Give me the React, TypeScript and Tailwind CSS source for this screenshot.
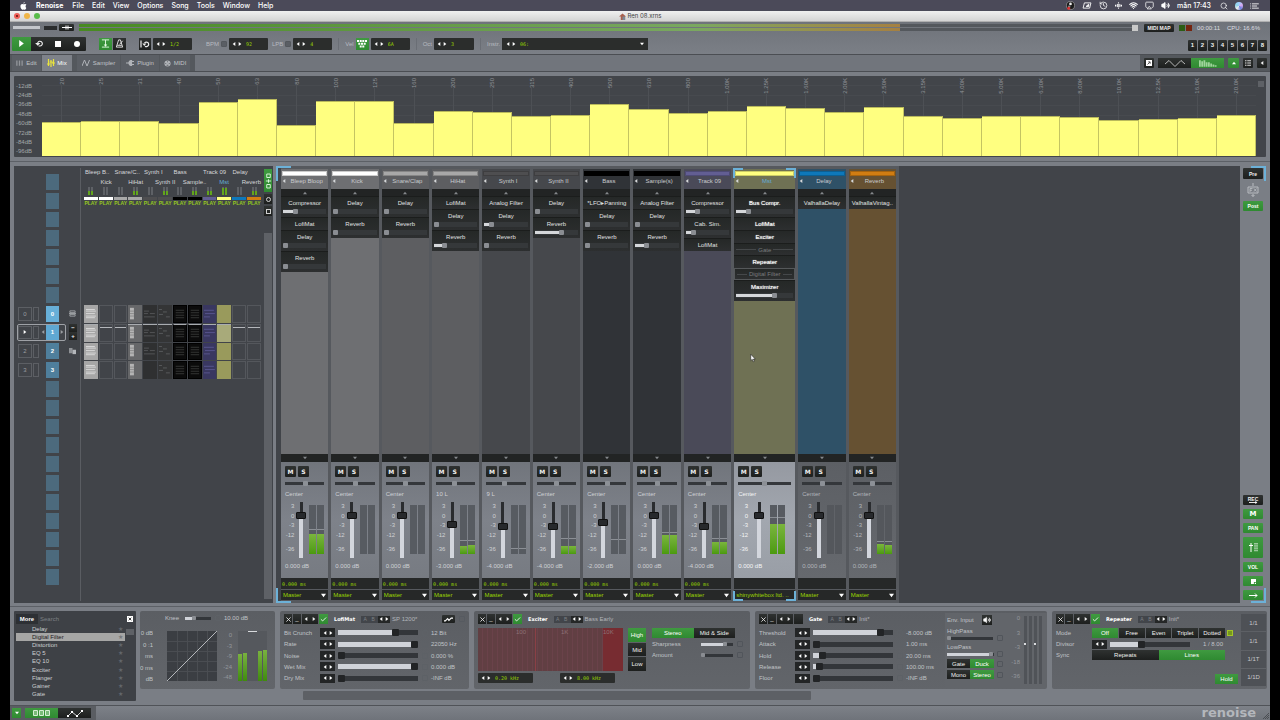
import React from "react";
import clsx from "clsx";
import { Search, Wifi, History, Volume2, Airplay, Check } from "lucide-react";

type Dir = "left" | "right" | "up" | "down";

const TRI: Record<Dir, string> = {
  left: "5,0 5,6 1,3",
  right: "1,0 1,6 5,3",
  up: "0,5 6,5 3,1",
  down: "0,1 6,1 3,5",
};

function Tri({ dir, className }: { dir: Dir; className?: string }) {
  return (
    <svg viewBox="0 0 6 6" className={clsx("shrink-0 fill-current", className ?? "size-[5px]")} aria-hidden="true">
      <polygon points={TRI[dir]} />
    </svg>
  );
}

const DARK = "bg-gradient-to-b from-[#2f3231] to-[#1d1f1e] text-[#f0f0f0]";
const GREEN = "bg-gradient-to-b from-[#3f9a40] to-[#2f8a31] text-white";

function Btn({
  on,
  className,
  label,
  children,
}: {
  on?: boolean;
  className?: string;
  label?: string;
  children?: React.ReactNode;
}) {
  return (
    <button
      type="button"
      aria-label={label}
      className={clsx("flex shrink-0 items-center justify-center whitespace-nowrap", on ? GREEN : DARK, className)}
    >
      {children}
    </button>
  );
}

function Steppers({ className, label }: { className?: string; label: string }) {
  return (
    <span className={clsx("flex shrink-0", className ?? "gap-[2px]")}>
      <button type="button" aria-label={`${label} down`} className="flex items-center">
        <Tri dir="left" className="size-1" />
      </button>
      <button type="button" aria-label={`${label} up`} className="flex items-center">
        <Tri dir="right" className="size-1" />
      </button>
    </span>
  );
}

function Field({ label, value, className }: { label: string; value: string; className?: string }) {
  return (
    <span className={clsx("flex shrink-0 items-center gap-1 rounded-[1px] bg-[#2b2d2c] pl-[3px] text-white", className)}>
      <Steppers label={label} className="gap-[2px]" />
      <input
        aria-label={label}
        defaultValue={value}
        className="w-full min-w-0 bg-transparent font-['DejaVu_Sans_Mono',monospace] text-[5px] text-[#9ad400] outline-none"
      />
    </span>
  );
}

function Tick({ label, className }: { label: string; className?: string }) {
  return (
    <input
      type="checkbox"
      aria-label={label}
      className={clsx("size-[6px] shrink-0 appearance-none rounded-[1px] border", className ?? "border-[#565a60] bg-transparent")}
    />
  );
}

/* ---------- Menu bar and title ---------- */

function MenuBar() {
  const items = ["Renoise", "File", "Edit", "View", "Options", "Song", "Tools", "Window", "Help"];
  return (
    <header className="flex h-[11px] items-center bg-[#4b4a59] pr-[11px] pl-[10px] font-['Inter',sans-serif] text-[7px] leading-none text-white">
      <svg viewBox="0 0 14 17" className="mr-[9px] h-[8px] w-[7px] fill-white" aria-label="Apple">
        <path d="M9.6 0c.1 1.500-1.100 3.200-2.700 3.300C6.700 1.700 8.100.2 9.600 0zM13 12.500c-.7 1.700-1.900 3.800-3.300 3.800-1 0-1.300-.6-2.600-.6s-1.700.6-2.600.6C2.700 16.400.5 12.500.5 9.200.5 6 2.500 4.300 4.400 4.300c1.100 0 2 .7 2.700.7.600 0 1.700-.8 3.100-.8.600 0 2 .2 2.900 1.600-2.500 1.500-2.100 5.100-.1 6.700z" />
      </svg>
      <nav className="flex gap-[8px]">
        {items.map((t, i) => (
          <a key={t} href="#" className={i === 0 ? "mr-px font-bold" : "font-medium"}>
            {t}
          </a>
        ))}
      </nav>
      <div className="ml-auto flex items-center gap-[7px]">
        <svg viewBox="0 0 10 10" className="size-[9px]" aria-hidden="true">
          <circle cx="5" cy="5" r="4.500" fill="#1a1a1a" stroke="#bbb" strokeWidth=".6" />
          <circle cx="5" cy="3.300" r="1.500" fill="#eee" />
          <circle cx="3.500" cy="6.300" r="1.400" fill="#888" />
          <circle cx="3" cy="8" r="1.700" fill="#d33" />
        </svg>
        <svg viewBox="0 0 10 8" className="h-[7px] w-[10px]" fill="none" stroke="#fff" aria-hidden="true">
          <path d="M2 1h7.500L8 7H.5z" />
          <path d="M4 5l3-2.500V5z" fill="#fff" />
        </svg>
        <History className="size-[9px]" strokeWidth={2} />
        <svg viewBox="0 0 8 8" className="size-[7px] fill-white" aria-hidden="true">
          <path d="M4 0l1 1.500H3zM4 8l1-1.500H3zM0 3h1.500v2H0zM2.200 2.300h1v3.400h-1zM3.700 2h.8v4h-.8zM5 2.300h1v3.400H5zM6.500 3H8v2H6.500z" />
        </svg>
        <Wifi className="size-[9px]" strokeWidth={3} />
        <Airplay className="size-[9px]" strokeWidth={2} />
        <Volume2 className="size-[9px] fill-white" strokeWidth={2} />
        <span className="font-medium">mån 17:43</span>
        <Search className="ml-[2px] size-[8px]" strokeWidth={2} />
        <span className="size-[8px] rounded-full bg-[conic-gradient(#9fd0ff,#d9a9f0,#6c7fe0,#eee,#8fd4e8,#9fd0ff)]" />
        <svg viewBox="0 0 10 7" className="h-[6px] w-[9px]" stroke="#fff" aria-hidden="true">
          <path d="M0 1h1M2 1h8M0 3.500h1M2 3.500h6M0 6h1M2 6h8" />
        </svg>
      </div>
    </header>
  );
}

function TitleBar() {
  return (
    <div className="flex h-[11px] items-center border-b border-[#b0b0b0] bg-gradient-to-b from-[#f0f0f0] to-[#d4d4d4] px-1">
      <div className="flex flex-1 gap-1">
        <span className="flex size-[6px] items-center justify-center rounded-full bg-[#ee5f57]">
          <span className="size-[2px] rounded-full bg-[#5c0d0a]" />
        </span>
        <span className="size-[6px] rounded-full bg-[#f0b548]" />
        <span className="size-[6px] rounded-full bg-[#58bb4a]" />
      </div>
      <h1 className="flex items-center gap-[2px] font-['Inter',sans-serif] text-[6px] leading-none text-[#3e3e3e]">
        <svg viewBox="0 0 8 8" className="size-[7px]" aria-hidden="true">
          <path d="M0 4l4-3.500L8 4H7v4H2V4z" fill="#a8604c" />
          <path d="M4 4h3v4H4z" fill="#7d8894" />
        </svg>
        Ren 08.xrns
      </h1>
      <div className="flex-1" />
    </div>
  );
}

/* ---------- Transport ---------- */

function MasterMeter() {
  return (
    <div className="flex h-[11px] items-center pr-[10px] pl-[3px]">
      <div className="h-[3px] w-[27px] bg-[#c3c6cb]" />
      <div className="ml-1 h-1 w-[13px] bg-[#2a2c2d]" />
      <Btn label="Meter view" className="ml-[2px] h-[7px] w-[15px] rounded-[1px]">
        <svg viewBox="0 0 10 5" className="h-[5px] w-[10px]" stroke="#fff" aria-hidden="true">
          <path d="M0 2.500h10M4 .5v4M6 .5v4" />
        </svg>
      </Btn>
      <div className="ml-[5px] flex h-[7px] flex-1 flex-col gap-px">
        {[0, 1].map((k) => (
          <div key={k} className="flex flex-1 bg-[#54585d]">
            <div className="w-[78%] bg-gradient-to-r from-[#478a20] via-[#7aa860] via-75% to-[#a58042]" />
          </div>
        ))}
      </div>
      <div className="mr-[6px] size-[6px] bg-[#c9c9c9]" />
      <Btn className="h-[8px] w-[30px] rounded-[1px] text-[5px] font-bold">MIDI MAP</Btn>
      <div className="ml-[5px] flex gap-px">
        <span className="size-[6px] bg-[#2c5c14]" />
        <span className="size-[6px] bg-[#75240f]" />
      </div>
      <span className="ml-[5px] text-[#dcdde0]">00:00:11</span>
      <span className="ml-[7px] text-[#dcdde0]">CPU: 16.6%</span>
    </div>
  );
}

function Sep() {
  return <span className="h-3 w-px bg-[#6a6e75]" />;
}

function Transport() {
  const lab = "text-[#b7bac0]";
  return (
    <div className="flex h-[21px] items-center pr-[3px] pl-[2px]">
      <div className="flex h-[14px] w-[74px]">
        <Btn on label="Play" className="flex-1 rounded-l-[1px]">
          <Tri dir="right" className="size-[7px]" />
        </Btn>
        <Btn label="Loop" className="flex-1">
          <svg viewBox="0 0 10 8" className="h-[7px] w-[9px]" fill="none" stroke="#eee" strokeWidth="1.300" aria-hidden="true">
            <path d="M3 5a2.700 2.700 0 1 1 2.500 1.800H4" />
            <path d="M0 3.500h6L3 6.500z" fill="#eee" stroke="none" />
          </svg>
        </Btn>
        <Btn label="Stop" className="flex-1">
          <span className="size-[6px] bg-white" />
        </Btn>
        <Btn label="Record" className="flex-1 rounded-r-[1px]">
          <span className="size-[6px] rounded-full bg-white" />
        </Btn>
      </div>
      <div className="ml-[13px] flex h-3 gap-px">
        <Btn on label="Follow" className="w-[13px]">
          <svg viewBox="0 0 10 10" className="size-[9px]" stroke="#e8ffe8" fill="#e8ffe8" aria-hidden="true">
            <path d="M1 1h8M1 9h8M5 1v7" />
            <path d="M3 6h4L5 8.500z" stroke="none" />
          </svg>
        </Btn>
        <Btn label="Metronome" className="w-[13px]">
          <svg viewBox="0 0 10 10" className="size-[9px]" fill="none" stroke="#eee" aria-hidden="true">
            <path d="M4 1h2l2.500 8h-7zM5 6l3.500-4M2.500 7h5" />
          </svg>
        </Btn>
      </div>
      <div className="ml-[13px] flex h-3 items-stretch gap-[2px]">
        <Btn label="Quantize" className="w-3">
          <svg viewBox="0 0 10 10" className="size-[10px]" fill="none" stroke="#eee" strokeWidth="1.200" aria-hidden="true">
            <path d="M1 1.500v7M4.500 4A2.300 2.300 0 1 1 5 7.200" />
            <path d="M2.300 4.500h4L4.300 7z" fill="#eee" stroke="none" />
          </svg>
        </Btn>
        <Field label="Quantize amount" value="1/2" className="w-[39px]" />
      </div>
      <div className="ml-[14px] flex h-3 items-center gap-[2px]">
        <span className={lab}>BPM</span>
        <Tick label="BPM lock" className="border-[#54585d] bg-[#5a5e64]" />
        <Field label="BPM" value="92" className="h-3 w-[39px]" />
      </div>
      <div className="ml-1 flex h-3 items-center gap-[2px]">
        <span className={lab}>LPB</span>
        <Tick label="LPB lock" className="border-[#54585d] bg-[#5a5e64]" />
        <Field label="LPB" value="4" className="h-3 w-[39px]" />
      </div>
      <div className="ml-[6px] flex h-3 items-center gap-[2px]">
        <Sep />
        <span className={clsx(lab, "ml-1")}>Vel</span>
        <Btn on label="Velocity keys" className="h-3 w-[13px]">
          <svg viewBox="0 0 10 8" className="h-[8px] w-[10px] fill-white" aria-hidden="true">
            <path d="M0 0h2v2H0zM2.700 0h2v2h-2zM5.300 0h2v2h-2zM8 0h2v2H8zM1.300 2.700h2v2h-2zM4 2.700h2v2H4zM6.700 2.700h2v2h-2zM2.700 5.400h2v2h-2zM5.300 5.400h2v2h-2z" />
          </svg>
        </Btn>
        <Field label="Velocity" value="6A" className="h-3 w-[39px]" />
      </div>
      <div className="ml-[6px] flex h-3 items-center gap-[2px]">
        <Sep />
        <span className={clsx(lab, "ml-1")}>Oct</span>
        <Field label="Octave" value="3" className="h-3 w-[40px]" />
      </div>
      <div className="ml-[6px] flex h-3 items-center gap-[2px]">
        <Sep />
        <span className={clsx(lab, "ml-1")}>Instr.</span>
        <span className="flex h-3 w-[146px] items-center bg-[#2b2d2c] px-1 text-white">
          <Steppers label="Instrument" className="gap-[2px]" />
          <select
            aria-label="Instrument"
            className="ml-1 flex-1 appearance-none bg-transparent font-['DejaVu_Sans_Mono',monospace] text-[5px] text-[#9ad400] outline-none"
          >
            <option>06:</option>
          </select>
          <Tri dir="down" className="size-1" />
        </span>
      </div>
      <div className="mt-[3px] ml-auto flex gap-px">
        {[1, 2, 3, 4, 5, 6, 7, 8].map((n) => (
          <Btn key={n} className="h-[11px] w-[9px] rounded-[1px] text-[6px] font-bold">
            {n}
          </Btn>
        ))}
      </div>
    </div>
  );
}

/* ---------- Tabs ---------- */

function Tabs() {
  const tab = "flex h-full items-center justify-center gap-[3px] text-[#c0c3c7]";
  return (
    <div className="flex h-[18px] items-stretch border-y border-[#4b4e53] bg-[#54585d]">
      <div className="flex gap-px pl-[2px]">
        <button type="button" className={clsx(tab, "w-[29px] bg-[#5b5f65]")}>
          <svg viewBox="0 0 8 6" className="h-[6px] w-[7px]" stroke="#93969b" aria-hidden="true">
            <path d="M1 0v6M4 0v6M7 0v6" strokeWidth="1.500" />
          </svg>
          Edit
        </button>
        <button type="button" className="flex w-[30px] items-center justify-center gap-[2px] bg-[#7e8289] text-white">
          <svg viewBox="0 0 8 8" className="size-[8px]" stroke="#e9e43c" strokeWidth="1.200" aria-hidden="true">
            <path d="M1.500 0v7M4 1v7M6.500 0v7M0 5h3M2.600 3h3M5 4h3" />
          </svg>
          Mix
        </button>
      </div>
      <div className="ml-[5px] flex gap-px">
        <button type="button" className={clsx(tab, "w-[43px] bg-[#5b5f65]")}>
          <svg viewBox="0 0 8 8" className="size-[8px]" fill="none" stroke="#b0b3b8" aria-hidden="true">
            <path d="M0 7l2.500-6L5 7l2.500-6" />
          </svg>
          Sampler
        </button>
        <button type="button" className={clsx(tab, "w-[38px] bg-[#5b5f65]")}>
          <svg viewBox="0 0 8 6" className="h-[6px] w-[8px]" fill="none" stroke="#b0b3b8" strokeWidth="1.200" aria-hidden="true">
            <path d="M0 3h3M8 1.500H5.500M8 4.500H5.500" />
            <path d="M3 3a2.500 2.500 0 0 1 2.500-2.500v5A2.500 2.500 0 0 1 3 3z" fill="#b0b3b8" />
          </svg>
          Plugin
        </button>
        <button type="button" className={clsx(tab, "w-[30px] bg-[#5b5f65]")}>
          <svg viewBox="0 0 8 8" className="size-[7px]" aria-hidden="true">
            <circle cx="4" cy="4" r="3.500" fill="#b0b3b8" />
            <path d="M1.500 4h1M3.500 2h1M5.500 4h1M3 6h2" stroke="#55595e" />
          </svg>
          MIDI
        </button>
      </div>
      <div className="ml-[5px] flex-1 bg-[#71757c]" />
      <div className="flex items-center gap-1 pr-[3px] pl-1">
        <Btn label="Detach" className="size-[10px] rounded-[1px]">
          <svg viewBox="0 0 8 8" className="size-[6px]" aria-hidden="true">
            <path d="M0 0h8v8H0z" fill="#fff" />
            <path d="M2 6l3-3M3 2.500h2.500V5" stroke="#222" fill="none" />
          </svg>
        </Btn>
        <div className="flex h-[10px]">
          <Btn label="Scopes" className="w-[33px]">
            <svg viewBox="0 0 20 7" className="h-[7px] w-[20px]" fill="none" stroke="#ddd" strokeWidth=".8" aria-hidden="true">
              <path d="M0 4l4-3.500 6 6 6-6L20 4" />
            </svg>
          </Btn>
          <Btn on label="Spectrum" className="w-[33px]">
            <svg viewBox="0 0 20 7" className="h-[7px] w-[18px] fill-[#9fd39c]" aria-hidden="true">
              <path d="M0 0h2v7H0zM2.500 1h2v6h-2zM5 0h2v7H5zM7.500 2h2v5h-2zM10 2h2v5h-2zM12.500 3.500h2V7h-2zM15 4.500h2V7h-2zM17.500 5.500h2V7h-2z" />
            </svg>
          </Btn>
        </div>
        <Btn on label="Collapse" className="h-[10px] w-[11px] rounded-[1px]">
          <Tri dir="up" className="size-1" />
        </Btn>
        <Btn label="List" className="size-[10px] rounded-[1px]">
          <svg viewBox="0 0 8 8" className="size-[6px]" stroke="#eee" strokeWidth="1.200" aria-hidden="true">
            <path d="M0 1h2M3 1h5M0 4h2M3 4h5M0 7h2M3 7h5" />
          </svg>
        </Btn>
        <Btn label="Show side panel" className="size-[10px] rounded-[1px]">
          <Tri dir="left" className="size-1" />
        </Btn>
      </div>
    </div>
  );
}

/* ---------- Spectrum ---------- */

const BANDS: [string, number][] = [
  ["20", 34], ["25", 35], ["31", 35], ["40", 33], ["50", 54], ["63", 57], ["80", 31], ["100", 55],
  ["125", 55], ["160", 33], ["200", 45], ["250", 44], ["315", 40], ["400", 41], ["500", 52], ["630", 47],
  ["800", 43], ["1.00K", 45], ["1.25K", 50], ["1.60K", 48], ["2.00K", 44], ["2.50K", 49], ["3.15K", 40],
  ["4.00K", 38], ["5.00K", 40], ["6.30K", 40], ["8.00K", 39], ["10.0K", 36], ["12.5K", 37], ["16.0K", 38], ["20.0K", 41],
];

function Spectrum() {
  const db = [-12, -24, -36, -48, -60, -72, -84, -96];
  return (
    <section className="mx-1 mt-1 flex h-[81px] rounded-[1px] bg-[#42454a] pb-px">
      <div className="flex w-[28px] flex-col pt-[5px] pl-[2px] text-[#a2a5a9]">
        {db.map((d) => (
          <span key={d} className="flex flex-1 items-center">
            {d}dB
          </span>
        ))}
      </div>
      <div className="grid flex-1 grid-cols-[repeat(31,minmax(0,1fr))] bg-[repeating-linear-gradient(to_bottom,transparent_0,transparent_9px,#474a4f_9px,#474a4f_10px)]">
        {BANDS.map(([f, h]) => (
          <div key={f} className="flex flex-col items-center pt-[2px]">
            <span className="rotate-180 text-[#909398] [writing-mode:vertical-rl]">{f}</span>
            <span className="w-px flex-1 bg-[#4d5055]" />
            <span className="w-full border-t border-r border-t-[#b9b95c] border-r-[#c4c462] bg-[#ffff80]" style={{ height: h }} />
          </div>
        ))}
      </div>
      <div className="flex w-[10px] justify-center pt-[5px]">
        <svg viewBox="0 0 6 6" className="size-[6px]" stroke="#8b8e93" strokeWidth=".8" aria-hidden="true">
          <path d="M0 1h6M0 3h6M0 5h6" />
        </svg>
      </div>
    </section>
  );
}

/* ---------- Track data ---------- */

type Device = { n: string; s?: number; off?: boolean; boxed?: boolean };
type Track = {
  name: string;
  short: string;
  bar: string;
  body: string;
  pan: string;
  panPos: number;
  vol: string;
  fader: number;
  fill: [number, number];
  peak: number;
  delay?: string;
  out: string;
  devices: Device[];
  cell: string;
  strip: "normal" | "master" | "send";
};

const TRACKS: Track[] = [
  { name: "Bleep Bloop", short: "Bleep B..", bar: "bg-white", body: "bg-[#6e6f72]", pan: "Center", panPos: 50, vol: "0.000 dB", fader: 10, fill: [20, 20], peak: 25, delay: "0.000 ms", out: "Master", devices: [{ n: "Compressor", s: 26 }, { n: "LofiMat" }, { n: "Delay", s: 0 }, { n: "Reverb", s: 0 }], cell: "notes", strip: "normal" },
  { name: "Kick", short: "Kick", bar: "bg-white", body: "bg-[#6e6f72]", pan: "Center", panPos: 50, vol: "0.000 dB", fader: 10, fill: [0, 0], peak: 0, delay: "0.000 ms", out: "Master", devices: [{ n: "Delay", s: 0 }, { n: "Reverb", s: 0 }], cell: "", strip: "normal" },
  { name: "Snare/Clap", short: "Snare/C..", bar: "bg-[#a8a8a8]", body: "bg-[#5d5e61]", pan: "Center", panPos: 50, vol: "0.000 dB", fader: 10, fill: [0, 0], peak: 0, delay: "0.000 ms", out: "Master", devices: [{ n: "Delay", s: 0 }, { n: "Reverb", s: 0 }], cell: "", strip: "normal" },
  { name: "HiHat", short: "HiHat", bar: "bg-[#a8a8a8]", body: "bg-[#5d5e61]", pan: "10 L", panPos: 45, vol: "-3.000 dB", fader: 19, fill: [8, 9], peak: 14, delay: "0.000 ms", out: "Master", devices: [{ n: "LofiMat" }, { n: "Delay", s: 0 }, { n: "Reverb", s: 21 }], cell: "gray", strip: "normal" },
  { name: "Synth I", short: "Synth I", bar: "bg-[#4e4e50]", body: "bg-[#46484c]", pan: "9 L", panPos: 45, vol: "-4.000 dB", fader: 21, fill: [0, 0], peak: 6, delay: "0.000 ms", out: "Master", devices: [{ n: "Analog Filter" }, { n: "Delay", s: 12 }, { n: "Reverb", s: 0 }], cell: "lines", strip: "normal" },
  { name: "Synth II", short: "Synth II", bar: "bg-[#4e4e50]", body: "bg-[#46484c]", pan: "Center", panPos: 50, vol: "-4.000 dB", fader: 21, fill: [8, 8], peak: 16, delay: "0.000 ms", out: "Master", devices: [{ n: "Delay", s: 0 }, { n: "Reverb", s: 60 }], cell: "dashes", strip: "normal" },
  { name: "Bass", short: "Bass", bar: "bg-black", body: "bg-[#303337]", pan: "Center", panPos: 50, vol: "-2.000 dB", fader: 17, fill: [0, 0], peak: 15, delay: "0.000 ms", out: "Master", devices: [{ n: "*LFO▸Panning" }, { n: "Delay", s: 0 }, { n: "Reverb", s: 0 }], cell: "black", strip: "normal" },
  { name: "Sample(s)", short: "Sample..", bar: "bg-black", body: "bg-[#303337]", pan: "Center", panPos: 50, vol: "0.000 dB", fader: 10, fill: [19, 19], peak: 22, delay: "0.000 ms", out: "Master", devices: [{ n: "Analog Filter" }, { n: "Delay", s: 0 }, { n: "Reverb", s: 22 }], cell: "black", strip: "normal" },
  { name: "Track 09", short: "Track 09", bar: "bg-[#625e93]", body: "bg-[#4a4a58]", pan: "Center", panPos: 50, vol: "-4.000 dB", fader: 21, fill: [12, 12], peak: 16, delay: "0.000 ms", out: "Master", devices: [{ n: "Compressor", s: 22 }, { n: "Cab. Sim.", s: 14 }, { n: "LofiMat" }], cell: "violet", strip: "normal" },
  { name: "Mst", short: "Mst", bar: "bg-[#ffff80]", body: "bg-[#6f7154]", pan: "Center", panPos: 50, vol: "0.000 dB", fader: 10, fill: [30, 30], peak: 37, out: "shinywhitebox ltd. ..", devices: [{ n: "Bus Compr.", s: 18 }, { n: "LofiMat" }, { n: "Exciter" }, { n: "Gate", off: true }, { n: "Repeater" }, { n: "Digital Filter", off: true, boxed: true }, { n: "Maximizer", s: 68 }], cell: "yellow", strip: "master" },
  { name: "Delay", short: "Delay", bar: "bg-[#0e78ba]", body: "bg-[#2f5167]", pan: "Center", panPos: 50, vol: "0.000 dB", fader: 10, fill: [0, 0], peak: 0, out: "Master", devices: [{ n: "ValhallaDelay" }], cell: "", strip: "send" },
  { name: "Reverb", short: "Reverb", bar: "bg-[#d17d12]", body: "bg-[#665132]", pan: "Center", panPos: 50, vol: "0.000 dB", fader: 10, fill: [10, 9], peak: 13, out: "Master", devices: [{ n: "ValhallaVintag.." }], cell: "", strip: "send" },
];

/* ---------- Pattern matrix ---------- */

function Cell({ kind, row }: { kind: string; row: number }) {
  const line = row === 1 ? "border-t border-t-[#a9acb0]" : "";
  if (kind === "")
    return <div className="flex flex-col border border-[#54575c] pt-[2px]">{row === 1 && <div className="h-px bg-[#b4b7bb]" />}</div>;
  const bg: Record<string, string> = {
    notes: "bg-[#a6a6a6]",
    gray: "bg-[#666769]",
    lines: "bg-[#2f3031]",
    dashes: "bg-[#343536]",
    black: "bg-[#0b0b0b] border border-black",
    violet: "bg-[#393760]",
    yellow: row === 1 ? "bg-[#a8aa7a]" : "bg-[#999a5c]",
  };
  return (
    <div className={clsx(bg[kind], line, "flex min-h-0 items-center overflow-hidden")}>
      <svg viewBox="0 0 14 17" preserveAspectRatio="none" className="h-[14px] w-full" fill="none" aria-hidden="true">
        {kind === "notes" && <path d="M2 3h9M2 5h10M2 8h9M2 11h10M2 13h9" stroke="#dcdcdc" />}
        {kind === "gray" && <path d="M2 1h4v14H2z" fill="#b4b4b4" />}
        {kind === "gray" && <path d="M2 5h4M2 8h4M2 11h4" stroke="#8a8a8a" />}
        {kind === "lines" && row < 3 && <path d="M1 5h5M7 8h5M1 8h4M1 12h11" stroke="#56585a" />}
        {kind === "dashes" && <path d="M1 3h3M5 6h4M1 9h4M8 12h4" stroke="#5b5d5f" />}
        {kind === "black" && <path d="M2 4h10M2 7h10M2 10h10M2 13h10" stroke="#3c3d3c" />}
        {kind === "violet" && <path d="M1 4h10M2 8h10M1 12h6" stroke="#5a5791" />}
      </svg>
    </div>
  );
}

function SequenceRow({ i }: { i: number }) {
  const n = i - 7;
  const active = n >= 0 && n <= 3;
  const current = n === 1;
  return (
    <div
      className={clsx(
        "-my-px flex min-h-0 items-center rounded-[2px] border text-[#9a9da1]",
        current ? "border-[#9ea1a6]" : "border-transparent",
      )}
    >
      <div className="flex w-[21px] gap-px self-stretch py-px">
        {active && (
          <>
            <span className="flex flex-1 items-center justify-center border border-[#5c5f64]">
              {current ? <Tri dir="right" className="size-1 text-white" /> : n}
            </span>
            <span className="w-[6px] border border-[#5c5f64]" />
          </>
        )}
      </div>
      <span className="flex w-[7px] justify-center">{current && <Tri dir="left" className="size-1" />}</span>
      <button
        type="button"
        aria-label={active ? undefined : `Empty slot ${i}`}
        className={clsx(
          "flex w-[13px] items-center justify-center self-stretch font-bold text-white",
          !active && "bg-[#4c6a7d]",
          n === 0 && "bg-[#67afd8]",
          n === 1 && "bg-[#5fa8d2]",
          (n === 2 || n === 3) && "bg-[#4f7f9c]",
        )}
      >
        {active ? n : ""}
      </button>
      {current && <Tri dir="right" className="ml-px size-1" />}
    </div>
  );
}

function PatternMatrix() {
  const grid = "grid grid-rows-[repeat(22,minmax(0,1fr))] pt-[8px] pb-[18px]";
  return (
    <section className="flex w-[259px] shrink-0 bg-[#414449]">
      <div className={clsx(grid, "w-[52px] gap-y-[3px] pl-[3px]")}>
        {Array.from({ length: 22 }, (_, i) => (
          <SequenceRow key={i} i={i} />
        ))}
      </div>
      <div className={clsx(grid, "w-[14px] justify-center gap-y-[2px] text-[#dcdcdc]")}>
        <svg viewBox="0 0 8 8" className="row-start-8 size-[7px] self-center" fill="none" stroke="#a5a8ac" aria-hidden="true">
          <path d="M1 1h6v2H1zM1 5h6v2H1zM0 4h8" />
        </svg>
        <div className="row-start-9 flex flex-col">
          <Btn className="h-2 w-2 font-bold">−</Btn>
          <Btn className="h-2 w-2 font-bold">+</Btn>
        </div>
        <svg viewBox="0 0 8 8" className="row-start-10 size-[7px] self-center" aria-hidden="true">
          <path d="M0 0h4v6H0z" fill="#8f9296" />
          <path d="M4 2h4v5H4z" fill="#b4b7bb" />
        </svg>
      </div>
      <div className="my-[2px] w-px bg-[#5a5d62]" />
      <div className={clsx(grid, "flex-1 gap-y-px pl-[3px]")}>
        <div className="row-span-2 row-start-1 -mt-[6px] h-[38px]">
          <div className="grid h-[10px] grid-cols-6 whitespace-nowrap text-[#d6d7d9]">
            {TRACKS.filter((_, i) => i % 2 === 0).map((t) => (
              <span key={t.name} className="pl-px">
                {t.short}
              </span>
            ))}
          </div>
          <div className="grid h-[9px] grid-cols-12 whitespace-nowrap text-[#d6d7d9]">
            {TRACKS.map((t, i) => (
              <span
                key={t.name}
                className={clsx("flex", i === 11 ? "justify-end" : "justify-center", t.name === "Mst" && "text-[#63acd6]")}
              >
                {i % 2 === 1 ? t.short : ""}
              </span>
            ))}
          </div>
          <div className="grid grid-cols-12 gap-x-px">
            {TRACKS.map((t) => (
              <div key={t.name} className="flex flex-col items-center">
                <div className="flex h-[8px] gap-px">
                  {t.fill.map((f, k) => (
                    <span key={k} className="flex w-[2px] items-end bg-[#5e6166]">
                      <span className={clsx("w-full bg-[#62a51c]", f > 25 ? "h-[7px]" : f > 0 ? "h-1" : "h-0")} />
                    </span>
                  ))}
                </div>
                <span className={clsx("mt-[2px] h-[3px] w-full", t.bar)} />
                <span className="mt-px text-[5px] leading-[5px] font-bold text-[#95c820]">PLAY</span>
              </div>
            ))}
          </div>
        </div>
        {[0, 1, 2, 3].map((r) => (
          <div
            key={r}
            className={clsx(
              "grid min-h-0 grid-cols-12 gap-x-px",
              r === 0 && "row-start-8",
              r === 1 && "row-start-9",
              r === 2 && "row-start-10",
              r === 3 && "row-start-11",
            )}
          >
            {TRACKS.map((t) => (
              <Cell key={t.name} kind={t.cell} row={r} />
            ))}
          </div>
        ))}
      </div>
      <div className="flex w-3 flex-col items-center gap-[2px] pt-[3px] pb-1 pl-[2px]">
        <Btn on label="Mute mode" className="h-[23px] w-2">
          <svg viewBox="0 0 8 20" className="h-[20px] w-[7px]" fill="none" stroke="#e9ffe9" aria-hidden="true">
            <path d="M2 2h4v4H2zM1 10h6M4 8v4M2 14h4v4H2z" />
          </svg>
        </Btn>
        <Btn label="Record mode" className="h-[10px] w-2">
          <span className="size-[5px] rounded-full border border-[#d0d0d0]" />
        </Btn>
        <Btn label="Block mode" className="h-[10px] w-2">
          <span className="size-[5px] border border-[#d0d0d0]" />
        </Btn>
        <span className="mt-[15px] w-2 flex-1 bg-[#5e6166]" />
      </div>
    </section>
  );
}

/* ---------- Mixer ---------- */

function DeviceSlot({ d, master }: { d: Device; master: boolean }) {
  const slider = d.s !== undefined;
  return (
    <li
      className={clsx(
        "flex flex-col border-t border-[#1b1d1c] bg-gradient-to-b from-[#252827] to-[#2d2f30]",
        slider ? "h-[21px]" : d.off ? "h-3" : "h-[13px]",
        d.boxed && "border border-[#55585a]",
      )}
    >
      <div className="flex flex-1 items-center justify-center gap-[2px]">
        {d.off && <span className="ml-[2px] h-px flex-1 bg-[#45484a]" />}
        <span
          className={clsx(
            "whitespace-nowrap",
            d.off ? "text-[#7a7c7e]" : master ? "text-white [text-shadow:0_0_1px_#fff]" : "text-[#e0e1e2]",
          )}
        >
          {d.n}
        </span>
        {d.off && <span className="mr-[2px] h-px flex-1 bg-[#45484a]" />}
      </div>
      {slider && (
        <div className="mx-[2px] mb-[3px] flex h-[5px] items-center bg-[#35383a]">
          <div className="h-[3px] bg-[#d5d7da]" style={{ width: `${(d.s ?? 0) * 0.92}%` }} />
          <div className="size-[5px] rounded-[1px] bg-[#8a8d92]" />
        </div>
      )}
    </li>
  );
}

function Corners({ size }: { size: "lg" | "sm" }) {
  const s = size === "lg" ? "size-[15px]" : "size-[10px]";
  return (
    <div className="pointer-events-none absolute inset-0">
      <span className={clsx("absolute top-0 left-0 border-t-2 border-l-2 border-[#6cb1d8]", s)} />
      <span className={clsx("absolute top-0 right-0 border-t-2 border-r-2 border-[#6cb1d8]", s)} />
      <span className={clsx("absolute bottom-0 left-0 border-b-2 border-l-2 border-[#6cb1d8]", s)} />
      <span className={clsx("absolute right-0 bottom-0 border-r-2 border-b-2 border-[#6cb1d8]", s)} />
    </div>
  );
}

function MixerStrip({ t }: { t: Track }) {
  const master = t.strip === "master";
  const send = t.strip === "send";
  const bg = master
    ? "bg-gradient-to-b from-[#9599a1] via-[#a2a7af] to-[#999ea6] text-[#f4f5f6]"
    : send
      ? "bg-gradient-to-b from-[#5c5f64] to-[#66696e] text-[#b2b5ba]"
      : "bg-gradient-to-b from-[#71757c] via-[#7e828a] to-[#777b82] text-[#cfd1d5]";
  return (
    <div className={clsx("flex h-[116px] flex-col px-[4px]", bg)}>
      <div className="mt-1 flex gap-[2px]">
        <Btn className="size-[11px] rounded-[1px] font-['DejaVu_Sans',sans-serif] text-[6px] font-bold">M</Btn>
        <Btn className="size-[11px] rounded-[1px] font-['DejaVu_Sans',sans-serif] text-[6px] font-bold">S</Btn>
      </div>
      <div className="mt-1 flex h-[5px] items-center">
        <span className="h-[3px] bg-[#34373b]" style={{ width: `${t.panPos - 5}%` }} />
        <span className="size-[5px] rounded-[1px] bg-[#8c9096]" />
        <span className="h-[3px] flex-1 bg-[#34373b]" />
      </div>
      <span className="mt-[4px] h-2">{t.pan}</span>
      <div className="mt-1 flex h-[56px]">
        <div className="flex w-[10px] flex-col items-end text-right">
          <span className="h-[8px]">3</span>
          <span className="mt-[2px] h-[8px]">0</span>
          <span className="mt-px h-[8px]">-3</span>
          <span className="mt-[2px] h-[8px]">-12</span>
          <span className="mt-[6px] h-[8px]">-36</span>
        </div>
        <div className={clsx("flex w-[10px] flex-col items-center", master ? "ml-[6px]" : "ml-[2px]")}>
          <span className="w-[3px] shrink-0 bg-[#2a2c2f]" style={{ height: t.fader }} />
          <span className="h-[7px] w-[10px] shrink-0 rounded-[1px] border border-[#111] bg-[#27292c]" />
          <span className="w-1 flex-1 bg-[#d3d6dd]" />
        </div>
        <div className={clsx("mt-[3px] flex h-[49px] gap-px", master ? "ml-[6px]" : "ml-[3px]")}>
          {t.fill.map((f, k) => (
            <div key={k} className={clsx("flex w-[7px] flex-col justify-end", send ? "bg-[#54575c]" : "bg-[#575b61]")}>
              {t.peak > 0 && <span className="h-px bg-[#8b8f95]" style={{ marginBottom: Math.max(t.peak - f - 1, 0) }} />}
              <span className="bg-gradient-to-b from-[#7ab53c] to-[#4b9a0d]" style={{ height: f }} />
            </div>
          ))}
        </div>
      </div>
      <span className="mt-[4px] h-2">{t.vol}</span>
    </div>
  );
}

function MixerTrack({ t }: { t: Track }) {
  const master = t.strip === "master";
  return (
    <article className="relative flex min-w-0 flex-col py-[3px]">
      <div className="mr-[3px] flex flex-1 flex-col">
        <div className={clsx("flex h-[20px] flex-col px-px pt-[2px] pb-1", t.body)}>
          <span className={clsx("h-[5px] shrink-0 border border-black/20", t.bar)} />
          <div className="flex flex-1 items-center">
            <Tri dir="left" className="size-1 text-[#d5d7d9]" />
            <h2 className={clsx("flex-1 text-center whitespace-nowrap", master ? "text-[#63acd6]" : "text-[#c9cbce]")}>{t.name}</h2>
          </div>
        </div>
        <div className="flex h-[7px] items-center justify-center bg-[#222424] text-[#85888b]">
          <Tri dir="up" className="size-1" />
        </div>
        <div className={clsx("flex-1", t.body)}>
          <ul>
            {t.devices.map((d) => (
              <DeviceSlot key={d.n} d={d} master={master} />
            ))}
          </ul>
          {master && (
            <svg viewBox="0 0 8 12" className="absolute top-[187px] left-[16px] h-[10px] w-[6px]" aria-hidden="true">
              <path d="M1 1v8.500l2-1.800L4.300 11l1.500-.6-1.300-3H7z" fill="#fff" stroke="#222" strokeWidth=".8" />
            </svg>
          )}
        </div>
        <div className="flex h-[8px] items-center justify-center bg-[#222424] text-[#85888b]">
          <Tri dir="down" className="size-1" />
        </div>
        <MixerStrip t={t} />
        <div className="flex h-[11px] items-center bg-[#262828] pl-px font-['DejaVu_Sans_Mono',monospace] text-[5px] text-[#9ad400]">
          {t.delay}
        </div>
        <div className="mt-px flex h-[10px] items-center bg-[#262828] px-[2px] text-white">
          {master ? (
            <select aria-label="Mst output" className="w-full appearance-none bg-transparent text-[#9ad400] outline-none">
              <option>{t.out}</option>
            </select>
          ) : (
            <>
              <select aria-label={`${t.name} output`} className="min-w-0 flex-1 appearance-none bg-transparent text-[#9ad400] outline-none">
                <option>{t.out}</option>
              </select>
              <Tri dir="down" className="size-[5px]" />
            </>
          )}
        </div>
      </div>
      {master && (
        <div className="absolute inset-y-[2px] -left-px right-[2px]">
          <Corners size="sm" />
        </div>
      )}
    </article>
  );
}

function Mixer() {
  const b = "w-[20px] rounded-[1px] text-[5px] font-bold";
  return (
    <section className="relative flex min-w-0 flex-1">
      <div className="min-w-0 flex-1 bg-[#414449] pl-[5px]">
        <div className="grid h-full w-[618px] grid-cols-[repeat(9,minmax(0,11fr))_minmax(0,14fr)_repeat(2,minmax(0,11fr))] bg-[#56595e]">
          {TRACKS.map((t) => (
            <MixerTrack key={t.name} t={t} />
          ))}
        </div>
      </div>
      <div className="flex w-[26px] flex-col items-center pt-[2px] pb-[3px]">
        <Btn className={clsx(b, "h-[11px]")}>Pre</Btn>
        <svg viewBox="0 0 12 14" className="my-1 h-[14px] w-[12px]" stroke="#b8bbc0" fill="none" aria-hidden="true">
          <path d="M6 0v3M6 11v2.500M4.500 12L6 13.500 7.500 12" />
          <path d="M1 4h10v6H1z" />
          <path d="M3 9V5.500h2.500M3 7.300h2M7 5.500l2.500 3M9.500 5.500L7 8.500" strokeWidth=".9" />
        </svg>
        <Btn on className={clsx(b, "h-[10px]")}>Post</Btn>
        <div className="mt-auto flex flex-col gap-[4px]">
          <Btn className={clsx(b, "h-[10px] flex-col text-[4px] leading-[4px]")}>
            REC
            <svg viewBox="0 0 10 3" className="h-[3px] w-[9px]" stroke="#fff" aria-hidden="true">
              <path d="M0 1.500h9M7.500 0v3" />
            </svg>
          </Btn>
          <Btn on className={clsx(b, "h-[10px] font-['DejaVu_Sans',sans-serif] text-[7px]")}>M</Btn>
          <Btn on className={clsx(b, "h-[10px]")}>PAN</Btn>
          <Btn on label="Faders" className={clsx(b, "h-[21px]")}>
            <svg viewBox="0 0 9 9" className="size-[9px]" stroke="#fff" aria-hidden="true">
              <path d="M2 0v9M0 2.500h4" />
              <path d="M6 0v9M8 0v9" strokeDasharray="1.500 .7" />
            </svg>
          </Btn>
          <Btn on className={clsx(b, "h-[10px]")}>VOL</Btn>
          <Btn on label="Delays" className={clsx(b, "h-[10px]")}>
            <svg viewBox="0 0 6 6" className="size-[5px] fill-white" aria-hidden="true">
              <path d="M0 0h6v3.500H3.500V6H0zM4.500 4.500H6V6H4.500z" />
            </svg>
          </Btn>
          <Btn on label="Routing" className={clsx(b, "h-[10px]")}>
            <svg viewBox="0 0 9 5" className="h-[5px] w-[9px]" stroke="#fff" fill="none" aria-hidden="true">
              <path d="M0 2.500h8M6 .5l2 2-2 2" />
            </svg>
          </Btn>
        </div>
      </div>
      <Corners size="lg" />
    </section>
  );
}

/* ---------- Device chain ---------- */

function DeviceBrowser() {
  const items = ["Delay", "Digital Filter", "Distortion", "EQ 5", "EQ 10", "Exciter", "Flanger", "Gainer", "Gate"];
  return (
    <aside className="flex w-[122px] shrink-0 flex-col rounded-[1px] bg-[#3e4146] px-[2px] pt-[3px] pb-[3px]">
      <div className="flex h-[10px] items-center pr-px">
        <button type="button" className="h-full w-[22px] bg-[#2d3034] font-bold text-white">
          More
        </button>
        <input type="search" aria-label="Search devices" placeholder="Search" className="ml-[2px] min-w-0 flex-1 bg-transparent outline-none placeholder:text-[#7d8085]" />
        <button type="button" aria-label="Clear" className="flex size-[6px] items-center justify-center bg-white">
          <svg viewBox="0 0 6 6" className="size-1" stroke="#222" strokeWidth="1.300" aria-hidden="true">
            <path d="M1 1l4 4M5 1L1 5" />
          </svg>
        </button>
      </div>
      <div className="mt-px flex flex-1">
        <ul className="flex flex-1 flex-col text-[#cdcfd1]">
          {items.map((t, i) => (
            <li
              key={t}
              className={clsx(
                "flex flex-1 items-center pl-4 leading-none",
                i === 1 && "bg-[#a6a6a5] text-[#1e2022]",
              )}
            >
              <span className="flex-1">{t}</span>
              <span className={clsx("pr-[2px]", i === 1 ? "text-[#77797b]" : "text-[#63666b]")}>★</span>
            </li>
          ))}
        </ul>
        <span className="mt-[4px] ml-px h-[6px] w-[8px] bg-[#5e6166]" />
      </div>
    </aside>
  );
}

function PanelHead({ title, preset, on = true, scope }: { title: string; preset: string; on?: boolean; scope?: boolean }) {
  return (
    <div className="flex h-[10px] items-center">
      <div className="flex h-full gap-px">
        <Btn className="w-[8px]" label={`Remove ${title}`}>
          <svg viewBox="0 0 6 6" className="size-[5px]" stroke="#eee" aria-hidden="true">
            <path d="M.5.5l5 5M5.500.5l-5 5" />
          </svg>
        </Btn>
        <Btn className="w-[8px]">_</Btn>
        <Btn className="w-[8px]" label="Move left">
          <Tri dir="left" className="size-1" />
        </Btn>
        <Btn className="-ml-px w-[8px]" label="Move right">
          <Tri dir="right" className="size-1" />
        </Btn>
        <Btn on={on} className="w-[9px]" label={`${title} enabled`}>
          {on && <Check className="size-[7px]" strokeWidth={3} />}
        </Btn>
      </div>
      <h3 className="mx-[6px] font-['DejaVu_Sans',sans-serif] text-[5px] font-bold text-white">{title}</h3>
      <div className="flex h-[7px] items-center bg-[#42454a] text-[#7d8085]">
        <span className="w-2 text-center text-[5px]">A</span>
        <span className="w-2 text-center text-[5px]">B</span>
        <span className="ml-px flex h-full items-center bg-[#252727] px-px text-white">
          <Steppers label={`${title} preset`} className="gap-[2px]" />
        </span>
      </div>
      <span className="ml-[2px] text-[#b3b6bb]">{preset}</span>
      {scope && (
        <div className="ml-auto flex items-center gap-1 pr-[4px]">
          <Btn label="Automation" className="h-[8px] w-[13px] rounded-[1px]">
            <svg viewBox="0 0 10 5" className="h-[5px] w-[9px]" stroke="#fff" strokeWidth="1.200" fill="none" aria-hidden="true">
              <path d="M0 4h1.500L4 1.500 5.500 3.500 8 1h2" />
            </svg>
          </Btn>
          <Tick label="Automated" />
        </div>
      )}
    </div>
  );
}

function Slider({ pos, className, small }: { pos: number; className?: string; small?: boolean }) {
  return (
    <div className={clsx("flex items-center", small ? "h-[4px]" : "h-[7px]", className)}>
      <span className={clsx("bg-[#d0d3d9]", small ? "h-[3px]" : "h-[5px]")} style={{ width: `${pos}%` }} />
      <span className={clsx("shrink-0 rounded-[1px]", small ? "size-[4px] bg-[#8a8d92]" : "h-[7px] w-[7px] bg-[#222426]")} />
      <span className={clsx("flex-1 bg-[#33363a]", small ? "h-[3px]" : "h-[5px]")} />
    </div>
  );
}

function Params({ rows, title }: { rows: [string, number, string][]; title: string }) {
  return (
    <div className="flex flex-1 flex-col pt-[3px] pb-[5px] text-[#c0c3c7]">
      {rows.map(([l, p, v]) => (
        <div key={l} className="flex flex-1 items-center">
          <span className="w-[36px] whitespace-nowrap">{l}</span>
          <span className="flex h-[9px] w-[15px] items-center justify-center bg-[#232526] text-white">
            <Steppers label={`${title} ${l}`} className="gap-[2px]" />
          </span>
          <Slider pos={p} className="ml-[3px] w-[80px]" />
          <Tick label={`${l} automated`} className="mr-[3px] ml-[4px] border-[#5d6166]" />
          <span className="whitespace-nowrap">{v}</span>
        </div>
      ))}
    </div>
  );
}

const PANEL = "rounded-[2px] bg-gradient-to-b from-[#5b5e63] to-[#62656a]";

function CompressorTail() {
  return (
    <div className={clsx(PANEL, "flex w-[135px] shrink-0 text-[#c0c3c7]")}>
      <div className="flex w-[13px] flex-col items-end justify-between overflow-hidden pt-[18px] pb-[6px] whitespace-nowrap">
        {["0 dB", "0 :1", "ms", "0 ms", "dB"].map((v, i) => (
          <span key={i}>{v}</span>
        ))}
      </div>
      <div className="flex flex-1 flex-col pt-[3px] pl-[12px]">
        <div className="flex h-2 items-center">
          <span className="w-[20px]">Knee</span>
          <Slider small pos={26} className="w-[26px]" />
          <Tick label="Knee automated" className="mr-[3px] ml-[4px] border-[#5d6166]" />
          <span>10.00 dB</span>
        </div>
        <div className="mt-[9px] flex">
          <svg viewBox="0 0 50 50" className="ml-[2px] size-[50px] bg-[#3b3e43]" stroke="#4a4d52" fill="none" aria-hidden="true">
            <path d="M10.500 0v50M20.500 0v50M30.500 0v50M40.500 0v50M0 10.500h50M0 20.500h50M0 30.500h50M0 40.500h50" />
            <path d="M0 50L50 0" stroke="#b5b8bc" />
          </svg>
          <div className="flex w-[17px] flex-col items-end justify-between pr-[2px] text-[#94979c]">
            {["0", "-3", "-9", "-24", "-48"].map((v) => (
              <span key={v}>{v}</span>
            ))}
          </div>
          <div className="ml-1 flex items-end gap-px bg-[#55585d]">
            <span className="h-[27px] w-1 bg-gradient-to-b from-[#79b13f] to-[#3f8c0a]" />
            <span className="h-[28px] w-1 bg-gradient-to-b from-[#79b13f] to-[#3f8c0a]" />
            <span className="h-full w-[9px] border-t border-[#d8dadd]" />
            <span className="h-[30px] w-1 bg-gradient-to-b from-[#79b13f] to-[#3f8c0a]" />
            <span className="h-[31px] w-1 bg-gradient-to-b from-[#79b13f] to-[#3f8c0a]" />
          </div>
        </div>
      </div>
    </div>
  );
}

function Exciter() {
  return (
    <div className={clsx(PANEL, "flex w-[276px] shrink-0 flex-col px-1 pt-[3px]")}>
      <PanelHead title="Exciter" preset="Bass Early" />
      <div className="mt-[4px] flex">
        <div className="w-[145px]">
          <div className="flex h-[43px] bg-[#613f43] bg-[repeating-linear-gradient(to_right,transparent_0,transparent_4px,#6a424a_4px,#6a424a_5px)] text-[#8d7276]">
            <span className="w-[58px] border-r border-[#8a4046] pl-[38px]">100</span>
            <span className="flex-1 pl-[25px]">1K</span>
            <span className="w-[20px] bg-[#772c31]">10K</span>
          </div>
          <div className="mt-[2px] flex h-[10px] justify-between pr-[8px]">
            <Field label="Low split" value="0.20 kHz" className="w-[55px]" />
            <Field label="High split" value="8.00 kHz" className="w-[55px]" />
          </div>
        </div>
        <div className="ml-[5px] flex h-[43px] w-[18px] flex-col gap-px">
          <Btn on className="flex-1">High</Btn>
          <Btn className="flex-1">Mid</Btn>
          <Btn className="flex-1">Low</Btn>
        </div>
        <div className="ml-[6px] flex-1 text-[#c0c3c7]">
          <div className="flex h-[10px] w-[83px]">
            <Btn on className="w-1/2">Stereo</Btn>
            <Btn className="w-1/2">Mid &amp; Side</Btn>
          </div>
          {(
            [
              ["Sharpness", 68],
              ["Amount", 0],
            ] as [string, number][]
          ).map(([l, p]) => (
            <div key={l} className="mt-px flex h-[10px] items-center">
              <span className="w-[49px]">{l}</span>
              <Slider small pos={p} className="w-[32px]" />
              <Tick label={`${l} automated`} className="ml-[4px] border-[#51555b]" />
            </div>
          ))}
        </div>
      </div>
    </div>
  );
}

function Gate() {
  return (
    <div className={clsx(PANEL, "flex w-[292px] shrink-0 pl-1")}>
      <div className="flex w-[186px] flex-col pt-[3px]">
        <PanelHead title="Gate" preset="Init*" on={false} />
        <Params
          title="Gate"
          rows={[
            ["Threshold", 80, "-8.000 dB"],
            ["Attack", 0, "1.00 ms"],
            ["Hold", 7, "20.00 ms"],
            ["Release", 4, "100.00 ms"],
            ["Floor", 0, "-INF dB"],
          ]}
        />
      </div>
      <div className="my-[2px] flex flex-1 bg-[#62656a] pl-[2px] text-[#c0c3c7]">
        <div className="flex w-[56px] flex-col">
          <div className="flex h-[14px] items-center">
            <span className="w-[35px]">Env. Input</span>
            <Btn label="Listen" className="size-[10px]">
              <Volume2 className="size-[8px] fill-white" strokeWidth={2} />
            </Btn>
          </div>
          {(
            [
              ["HighPass", 0],
              ["LowPass", 91],
            ] as [string, number][]
          ).map(([l, p]) => (
            <div key={l} className="h-[16px]">
              <div className="h-[8px]">{l}</div>
              <div className="flex items-center">
                <Slider small pos={p} className="w-[46px]" />
                <Tick label={`${l} automated`} className="ml-[4px] border-[#51555b]" />
              </div>
            </div>
          ))}
          {[
            ["Gate", "Duck"],
            ["Mono", "Stereo"],
          ].map(([a, c]) => (
            <div key={a} className="mb-[2px] flex h-[9px] items-center">
              <Btn className="h-full w-[23px]">{a}</Btn>
              <Btn on className="h-full w-[24px]">{c}</Btn>
              <Tick label={`${c} automated`} className="ml-[3px] border-[#51555b]" />
            </div>
          ))}
        </div>
        <div className="flex w-[17px] flex-col items-end justify-between pt-px pb-[7px] text-[#94979c]">
          {["0", "3", "-3", "-18", "-36"].map((v) => (
            <span key={v}>{v}</span>
          ))}
        </div>
        <div className="my-[3px] ml-[4px] flex gap-[2px]">
          {[0, 1, 2, 3].map((k) => (
            <span key={k} className="flex w-[3px] items-center bg-[#505358]">
              {(k === 0 || k === 2) && <span className="mb-[12px] size-[2px] bg-[#d8dadd]" />}
            </span>
          ))}
        </div>
      </div>
    </div>
  );
}

function Repeater() {
  const row = "flex h-[10px] items-center";
  return (
    <div className={clsx(PANEL, "flex min-w-[215px] flex-1 pl-1 text-[#c0c3c7]")}>
      <div className="flex flex-1 flex-col pt-[3px]">
        <PanelHead title="Repeater" preset="Init*" />
        <div className={clsx(row, "mt-[4px]")}>
          <span className="w-[36px]">Mode</span>
          <div className="flex h-full w-[133px] gap-px">
            {["Off", "Free", "Even", "Triplet", "Dotted"].map((m, i) => (
              <Btn key={m} on={i === 0} className="flex-1">
                {m}
              </Btn>
            ))}
          </div>
          <svg viewBox="0 0 6 6" className="ml-[2px] size-[6px]" aria-hidden="true">
            <path d="M0 0h6v6H0z" fill="#a3c626" />
            <path d="M1 2h4M1 4h4" stroke="#4a6a14" />
          </svg>
        </div>
        <div className={clsx(row, "mt-px")}>
          <span className="w-[36px]">Divisor</span>
          <span className="flex h-[9px] w-[15px] items-center justify-center bg-[#232526] text-white">
            <Steppers label="Divisor" className="gap-[2px]" />
          </span>
          <Slider pos={35} className="ml-[3px] w-[80px]" />
          <Tick label="Divisor automated" className="ml-[4px] border-[#5d6166]" />
          <span className="ml-[3px]">1 / 8.00</span>
        </div>
        <div className={clsx(row, "mt-px")}>
          <span className="w-[36px]">Sync</span>
          <div className="flex h-full w-[133px]">
            <Btn className="flex-1">Repeats</Btn>
            <Btn on className="flex-1">Lines</Btn>
          </div>
        </div>
        <Btn on className="mt-auto mr-[3px] mb-[5px] h-[10px] w-[23px] self-end">Hold</Btn>
      </div>
      <div className="my-[3px] mr-px flex w-[25px] flex-col gap-px">
        {["1/1", "1/1", "1/1T", "1/1D"].map((v, i) => (
          <button key={i} type="button" className="flex-1 bg-[#4e5156] text-[#c6c8cb]">
            {v}
          </button>
        ))}
      </div>
    </div>
  );
}

function DeviceChain() {
  return (
    <section className="mx-1 flex h-[94px] gap-1 pt-[4px]">
      <DeviceBrowser />
      <div className="flex min-w-0 flex-1 flex-col">
        <div className="flex h-[78px] gap-[5px]">
          <CompressorTail />
          <div className={clsx(PANEL, "flex w-[189px] shrink-0 flex-col pt-[3px] pl-1")}>
            <PanelHead title="LofiMat" preset="SP 1200*" scope />
            <Params
              title="LofiMat"
              rows={[
                ["Bit Crunch", 67, "12 Bit"],
                ["Rate", 92, "22050 Hz"],
                ["Noise", 0, "0.000 %"],
                ["Wet Mix", 92, "0.000 dB"],
                ["Dry Mix", 0, "-INF dB"],
              ]}
            />
          </div>
          <Exciter />
          <Gate />
          <Repeater />
        </div>
        <div className="mt-[2px] ml-[163px] h-[9px] w-[508px] shrink-0 rounded-[1px] bg-[#5d6065]" />
      </div>
    </section>
  );
}

function StatusBar() {
  return (
    <footer className="mt-[4px] flex h-[15px] items-stretch border-t border-[#505358] bg-[#5a5d62]">
      <div className="flex w-[86px] items-center pl-[2px]">
        <Btn on label="Collapse device chain" className="h-[10px] w-[9px]">
          <Tri dir="down" className="size-1" />
        </Btn>
        <Btn on label="Device chain" className="ml-[4px] h-[10px] w-[33px]">
          <svg viewBox="0 0 17 6" className="h-[6px] w-[17px]" fill="#79ba78" stroke="#d5efd3" aria-hidden="true">
            <path d="M.5.5h4v5h-4zM6.500.5h4v5h-4zM12.500.5h4v5h-4z" />
          </svg>
        </Btn>
        <Btn label="Automation" className="h-[10px] w-[33px]">
          <svg viewBox="0 0 16 7" className="h-[7px] w-[16px]" fill="none" stroke="#fff" strokeWidth=".8" aria-hidden="true">
            <path d="M1 6l4-4 5 4 5-5" />
            <path d="M0 5h2v2H0zM4 1h2v2H4zM9 5h2v2H9zM14 0h2v2h-2z" fill="#fff" stroke="none" />
          </svg>
        </Btn>
      </div>
      <div className="flex flex-1 items-center justify-end bg-gradient-to-b from-[#7d8188] to-[#6f737a] pr-px">
        <span className="mr-[7px] font-['DejaVu_Sans',sans-serif] text-[13px] leading-[14px] font-bold text-[#b4b7bc]">renoise</span>
        <svg viewBox="0 0 6 6" className="mb-px size-[6px] self-end" stroke="#4b4e53" aria-hidden="true">
          <path d="M0 6l6-6M2 6l4-4M4 6l2-2" />
        </svg>
      </div>
    </footer>
  );
}

export default function App() {
  return (
    <div className="min-h-screen bg-black px-[10px] font-['Liberation_Sans',Arial,sans-serif] text-[6px] leading-[8px]">
      <div className="flex min-h-screen flex-col bg-[#7a7e85]">
        <MenuBar />
        <TitleBar />
        <div className="bg-gradient-to-b from-[#6f737a] to-[#7b7f86]">
          <MasterMeter />
          <Transport />
        </div>
        <Tabs />
        <Spectrum />
        <div className="mt-1 mb-[4px] h-px bg-[#5c6066]" />
        <main className="mx-1 flex min-h-[430px] flex-1 gap-[3px]">
          <PatternMatrix />
          <Mixer />
        </main>
        <div className="mt-[3px] h-px bg-[#5c6066]" />
        <DeviceChain />
        <StatusBar />
      </div>
    </div>
  );
}
